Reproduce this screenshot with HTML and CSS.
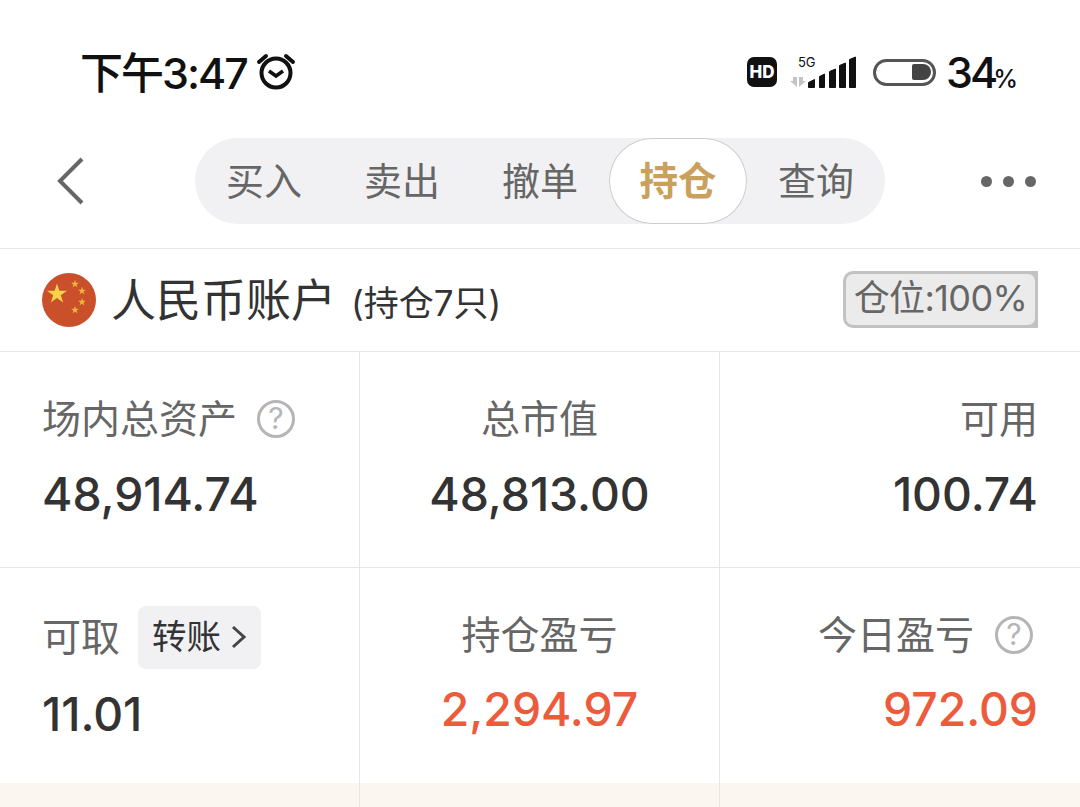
FILE: index.html
```html
<!DOCTYPE html>
<html>

<head>
    <title>持仓</title>
    <link rel="stylesheet" href="styles.css">
</head>

<body>
    <div class="status-bar">
        <div class="status-left">
            <span class="clock">下午3:47</span>
            <svg class="alarm" width="40" height="40" viewBox="0 0 40 40" fill="none" stroke="#111" stroke-width="4">
                <circle cx="20" cy="22" r="14.5"/>
                <path d="M13 20l7 5 7-5" stroke-width="3.5"/>
                <path d="M3 11l7-6M37 11l-7-6" stroke-linecap="round"/>
            </svg>
        </div>
        <div class="status-right">
            <span class="hd">HD</span>
            <div class="signal">
                <span class="five-g">5G</span>
                <svg width="68" height="32" viewBox="0 0 68 32">
                    <path d="M0 25h3v-4h4v10zM9 21h4v4h3l-7 6z" fill="#c4c4c4"/>
                    <g fill="#111" stroke="#111" stroke-linejoin="round">
                        <path d="M18.500 31.500v-5l6-3v8z"/>
                        <path d="M29.500 31.500v-11l5-2.500v13.500z"/>
                        <path d="M39.500 31.500v-16l6-2.500v18.500z"/>
                        <path d="M49.500 31.500v-22l6-2.500v24.500z"/>
                        <path d="M59.500 31.500v-28l6-2.500v30.500z"/>
                    </g>
                </svg>
            </div>
            <div class="battery"><span class="battery-level"></span></div>
            <span class="percent">34<small>%</small></span>
        </div>
    </div>

    <div class="nav">
        <svg class="back" width="30" height="48" viewBox="0 0 30 48" fill="none" stroke="#666" stroke-width="4">
            <path d="M26 2L4 24l22 22"/>
        </svg>
        <div class="tabs">
            <span class="tab">买入</span>
            <span class="tab">卖出</span>
            <span class="tab">撤单</span>
            <span class="tab active">持仓</span>
            <span class="tab">查询</span>
        </div>
        <div class="more"><i></i><i></i><i></i></div>
    </div>

    <div class="account">
        <svg class="flag" width="54" height="54" viewBox="0 0 54 54">
            <defs>
                <polygon id="star" points="0,-10.500 2.350,-3.240 9.990,-3.240 3.800,1.240 6.170,8.490 0,4 -6.170,8.490 -3.800,1.240 -9.990,-3.240 -2.350,-3.240"/>
            </defs>
            <circle cx="27" cy="27" r="27" fill="#c9502b"/>
            <use href="#star" fill="#f7d24a" transform="translate(15 21)"/>
            <use href="#star" fill="#f0b63a" transform="translate(33 11) scale(.4)"/>
            <use href="#star" fill="#f0b63a" transform="translate(40 18) scale(.4)"/>
            <use href="#star" fill="#f0b63a" transform="translate(40 29) scale(.4)"/>
            <use href="#star" fill="#f0b63a" transform="translate(33 37) scale(.4)"/>
        </svg>
        <span class="account-name">人民币账户</span>
        <span class="account-count">(持仓7只)</span>
        <div class="position"><span class="position-text">仓位:100%</span></div>
    </div>

    <div class="stats">
        <div class="cell">
            <div class="label">场内总资产<span class="help">?</span></div>
            <div class="value">48,914.74</div>
        </div>
        <div class="cell center">
            <div class="label">总市值</div>
            <div class="value">48,813.00</div>
        </div>
        <div class="cell right">
            <div class="label">可用</div>
            <div class="value">100.74</div>
        </div>
        <div class="cell low">
            <div class="label">可取<span class="transfer">转账
                <svg width="16" height="24" viewBox="0 0 16 24" fill="none" stroke="#444" stroke-width="3"><path d="M2 2l11 10L2 22"/></svg>
            </span></div>
            <div class="value">11.01</div>
        </div>
        <div class="cell center">
            <div class="label">持仓盈亏</div>
            <div class="value red">2,294.97</div>
        </div>
        <div class="cell right">
            <div class="label">今日盈亏<span class="help">?</span></div>
            <div class="value red">972.09</div>
        </div>
    </div>

    <div class="band">
        <div></div>
        <div></div>
        <div></div>
    </div>
</body>

</html>
```

FILE: styles.css
```css
* {
    box-sizing: border-box;
}

html,
body {
    height: 100%;
}

body {
    margin: 0;
    overflow: hidden;
    background: #fff;
    color: #333;
    font-family: Inter, "Noto Sans CJK SC", sans-serif;
}

.status-bar {
    display: flex;
    justify-content: space-between;
    align-items: center;
    height: 138px;
    padding: 6px 62px 0 80px;
    color: #111;
}

.status-left,
.status-right {
    display: flex;
    align-items: center;
}

.clock {
    margin-top: -5px;
    font-size: 43px;
    font-weight: 500;
    letter-spacing: -2px;
}

.alarm {
    margin-top: -2px;
    margin-left: 9px;
}

.hd {
    width: 30px;
    height: 30px;
    border-radius: 7px;
    background: #111;
    color: #fff;
    font-size: 17px;
    font-weight: 800;
    line-height: 30px;
    text-align: center;
}

.signal {
    position: relative;
    margin-left: 13px;
}

.signal svg {
    display: block;
}

.five-g {
    position: absolute;
    top: -1px;
    left: 8px;
    font-size: 13px;
    line-height: 14px;
}

.battery {
    display: flex;
    justify-content: flex-end;
    align-items: center;
    width: 63px;
    height: 27px;
    margin-left: 15px;
    padding: 0 2px;
    border: 3px solid #555;
    border-radius: 14px;
}

.battery-level {
    width: 19px;
    height: 16px;
    border-radius: 2px 8px 8px 2px;
    background: #444;
}

.percent {
    margin-left: 10px;
    font-size: 43px;
    font-weight: 500;
    letter-spacing: -3px;
}

.percent small {
    margin-left: -2px;
    font-size: 25px;
    letter-spacing: 0;
}

.nav {
    display: flex;
    align-items: center;
    height: 111px;
    padding-bottom: 24px;
    border-bottom: 1px solid #e6e6e6;
}

.back {
    margin-left: 56px;
}

.tabs {
    display: flex;
    width: 690px;
    height: 86px;
    margin-left: 109px;
    border-radius: 43px;
    background: #f1f1f3;
}

.tab {
    width: 138px;
    color: #666;
    font-size: 38px;
    line-height: 86px;
    text-align: center;
}

.tab.active {
    border-radius: 43px;
    background: #fff;
    box-shadow: inset 0 0 0 1px #ccc;
    color: #c9a15c;
    font-size: 38.500px;
    font-weight: 700;
}

.more {
    display: flex;
    gap: 11px;
    margin-left: 96px;
}

.more i {
    width: 11px;
    height: 11px;
    border-radius: 50%;
    background: #666;
}

.account {
    display: flex;
    align-items: center;
    height: 103px;
    padding: 0 42px;
    border-bottom: 1px solid #e6e6e6;
}

.account-name {
    margin-bottom: 6px;
    margin-left: 15px;
    font-size: 45px;
}

.account-count {
    margin-left: 15px;
    font-size: 35px;
}

.position {
    width: 195px;
    height: 57px;
    margin-bottom: 1px;
    margin-left: auto;
    padding: 3px;
    border-radius: 10px 0 0 10px;
    background: #c2c2c2;
}

.position-text {
    display: block;
    height: 51px;
    border-radius: 7px;
    background: #ebebeb;
    color: #666;
    font-size: 36px;
    letter-spacing: -0.600px;
    line-height: 49px;
    text-align: center;
}

.stats {
    display: grid;
    grid-template-columns: 360px 360px 360px;
    grid-template-rows: 216px 215px;
}

.cell {
    padding: 40px 42px 0;
    border-right: 1px solid #e6e6e6;
    border-bottom: 1px solid #e6e6e6;
}

.cell:nth-child(3n) {
    border-right: 0;
}

.cell:nth-child(n+4) {
    border-bottom: 0;
}

.cell:nth-child(n+4) .value {
    margin-top: 19px;
}

.cell.low {
    padding-top: 42px;
}

.cell.low .value {
    margin-top: 22px;
}

.center {
    text-align: center;
}

.right {
    text-align: right;
}

.label {
    display: flex;
    align-items: center;
    height: 54px;
    color: #666;
    font-size: 39px;
    line-height: 54px;
}

.center .label {
    justify-content: center;
}

.right .label {
    justify-content: flex-end;
}

.value {
    margin-top: 20px;
    color: #333;
    font-size: 46.300px;
    font-weight: 500;
    line-height: 56px;
}

.value.red {
    color: #ec5b3c;
}

.help {
    width: 38px;
    height: 38px;
    margin-left: 20px;
    border: 3px solid #b5b5b5;
    border-radius: 50%;
    color: #b5b5b5;
    font-size: 30px;
    line-height: 31px;
    text-align: center;
}

.right .help {
    margin-right: 5px;
    margin-left: 21px;
}

.transfer {
    display: flex;
    align-items: center;
    gap: 10px;
    height: 63px;
    margin-left: 18px;
    padding: 0 14px;
    border-radius: 8px;
    background: #f1f1f3;
    color: #333;
    font-size: 34.500px;
}

.band {
    display: grid;
    grid-template-columns: 360px 360px 360px;
    height: 24px;
    background: #fbf6f0;
}

.band div {
    border-right: 1px solid #e6e6e6;
}

.band div:last-child {
    border-right: 0;
}
```
